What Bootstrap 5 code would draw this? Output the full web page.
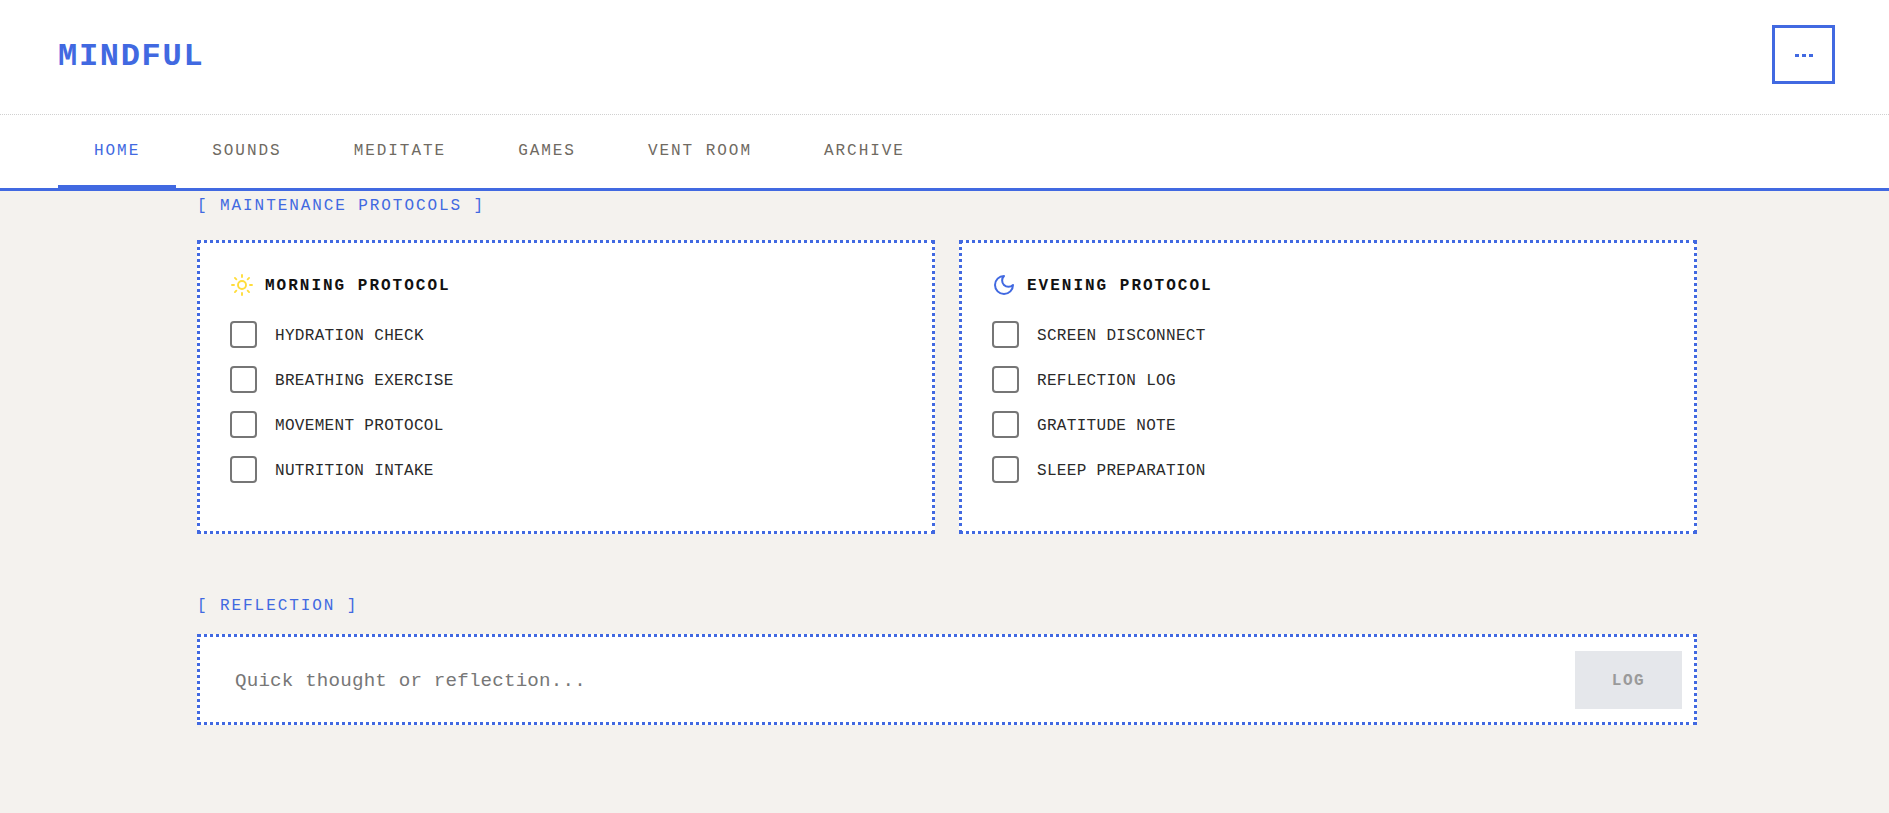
<!DOCTYPE html>
<html lang="en"><head><meta charset="utf-8"><title>Mindful</title>
<link href="https://cdn.jsdelivr.net/npm/bootstrap@5.3.0/dist/css/bootstrap.min.css" rel="stylesheet">
<style>
:root{--blue:#4169e1}
body{background:#f4f2ee;font-family:"Liberation Mono",monospace;min-height:100vh}
.top-bar{height:115px;padding:0 54px 0 58px;background:#fff;border-bottom:1px dotted #d0d0d0}
.logo-text{font-size:32px;font-weight:700;letter-spacing:1.7px;color:var(--blue);line-height:1}
.menu-btn{width:63px;height:59px;margin-bottom:6px;border:3px solid var(--blue);border-radius:0;background:#fff;color:var(--blue);padding:2px 0 0}
.tab-bar{background:#fff;padding:0 58px;border-bottom:3px solid var(--blue);height:76px}
.tab-bar .nav-link{height:73px;display:flex;align-items:center;padding:2px 36px 0;font-size:16px;letter-spacing:1.96px;color:#6f6a62;border-bottom:3px solid transparent}
.tab-bar .nav-link.active{color:var(--blue);border-bottom-color:var(--blue)}
.content-wrap{margin:0 192px 0 197px}
.sec-title{font-size:16px;letter-spacing:1.92px;color:var(--blue);line-height:24px;margin:0}
.sec-a{padding-top:3px}
.sec-cards{margin-top:22px}
.sec-b{margin-top:60px;margin-bottom:16px}
.dot-box{background:#fff;border:3px dotted var(--blue)}
.proto-card{flex:1 1 0;height:294px;padding:30px}
.proto-head{font-size:16px;font-weight:700;letter-spacing:2px;color:#111;gap:11px;height:24px;margin-bottom:24px}
.proto-head svg{flex:none}
.proto-head span,.check-row span{padding-top:2px}
.check-row{height:27px;margin-bottom:18px;gap:18px;font-size:16px;letter-spacing:.32px;color:#2a2a2a}
.check-row .form-check-input{width:27px;height:27px;margin:0;border:2px solid #767676;border-radius:4px;flex:none}
.log-box{height:91px;padding:14px 12px 13px}
.log-input{border:0;background:transparent;font-size:19.2px;letter-spacing:.18px;padding:2px 0 0 23px;border-radius:0;font-family:inherit;box-shadow:none}
.log-input:focus{box-shadow:none;background:transparent}
.log-input::placeholder{color:#777}
.log-btn,.log-btn:disabled{flex:none;width:107px;height:58px;padding:2px 0 0;background:#e5e7eb;color:#9a9a9a;border:0;border-radius:0;opacity:1;font-family:inherit;font-weight:700;font-size:16px;letter-spacing:1.6px}
</style></head>
<body>
<header class="top-bar d-flex justify-content-between align-items-center">
  <div class="logo-text">MINDFUL</div>
  <button class="btn menu-btn d-flex align-items-center justify-content-center" type="button" aria-label="Menu">
    <svg width="18" height="3" viewBox="0 0 18 3"><rect x="0" y="0" width="4" height="3" fill="#4169e1"/><rect x="7" y="0" width="4" height="3" fill="#4169e1"/><rect x="14" y="0" width="4" height="3" fill="#4169e1"/></svg>
  </button>
</header>
<nav class="tab-bar">
  <ul class="nav">
    <li class="nav-item"><a class="nav-link active" href="#">HOME</a></li>
    <li class="nav-item"><a class="nav-link" href="#">SOUNDS</a></li>
    <li class="nav-item"><a class="nav-link" href="#">MEDITATE</a></li>
    <li class="nav-item"><a class="nav-link" href="#">GAMES</a></li>
    <li class="nav-item"><a class="nav-link" href="#">VENT ROOM</a></li>
    <li class="nav-item"><a class="nav-link" href="#">ARCHIVE</a></li>
  </ul>
</nav>
<main class="content-wrap">
  <h2 class="sec-title fw-normal sec-a">[ MAINTENANCE PROTOCOLS ]</h2>
  <div class="d-flex gap-4 sec-cards">
    <section class="dot-box proto-card">
      <div class="proto-head d-flex align-items-center">
        <svg width="24" height="24" viewBox="0 0 24 24" fill="none" stroke="#ffdd3c" stroke-width="1.9" stroke-linecap="round"><circle cx="12" cy="12" r="4"/><path d="M12 2v2M12 20v2M4.93 4.93l1.41 1.41M17.66 17.66l1.41 1.41M2 12h2M20 12h2M6.34 17.66l-1.41 1.41M19.07 4.93l-1.41 1.41"/></svg>
        <span>MORNING PROTOCOL</span>
      </div>
      <label class="check-row d-flex align-items-center"><input class="form-check-input" type="checkbox"><span>HYDRATION CHECK</span></label>
      <label class="check-row d-flex align-items-center"><input class="form-check-input" type="checkbox"><span>BREATHING EXERCISE</span></label>
      <label class="check-row d-flex align-items-center"><input class="form-check-input" type="checkbox"><span>MOVEMENT PROTOCOL</span></label>
      <label class="check-row d-flex align-items-center"><input class="form-check-input" type="checkbox"><span>NUTRITION INTAKE</span></label>
    </section>
    <section class="dot-box proto-card">
      <div class="proto-head d-flex align-items-center">
        <svg width="24" height="24" viewBox="0 0 24 24" fill="none" stroke="#4169e1" stroke-width="2" stroke-linecap="round" stroke-linejoin="round"><path d="M12 3a6 6 0 0 0 9 9 9 9 0 1 1-9-9Z"/></svg>
        <span>EVENING PROTOCOL</span>
      </div>
      <label class="check-row d-flex align-items-center"><input class="form-check-input" type="checkbox"><span>SCREEN DISCONNECT</span></label>
      <label class="check-row d-flex align-items-center"><input class="form-check-input" type="checkbox"><span>REFLECTION LOG</span></label>
      <label class="check-row d-flex align-items-center"><input class="form-check-input" type="checkbox"><span>GRATITUDE NOTE</span></label>
      <label class="check-row d-flex align-items-center"><input class="form-check-input" type="checkbox"><span>SLEEP PREPARATION</span></label>
    </section>
  </div>
  <h2 class="sec-title fw-normal sec-b">[ REFLECTION ]</h2>
  <div class="dot-box log-box d-flex align-items-center">
    <input class="form-control log-input flex-grow-1" type="text" placeholder="Quick thought or reflection...">
    <button class="btn log-btn" type="button" disabled>LOG</button>
  </div>
</main>
<script src="https://cdn.jsdelivr.net/npm/bootstrap@5.3.0/dist/js/bootstrap.bundle.min.js"></script>
</body></html>
